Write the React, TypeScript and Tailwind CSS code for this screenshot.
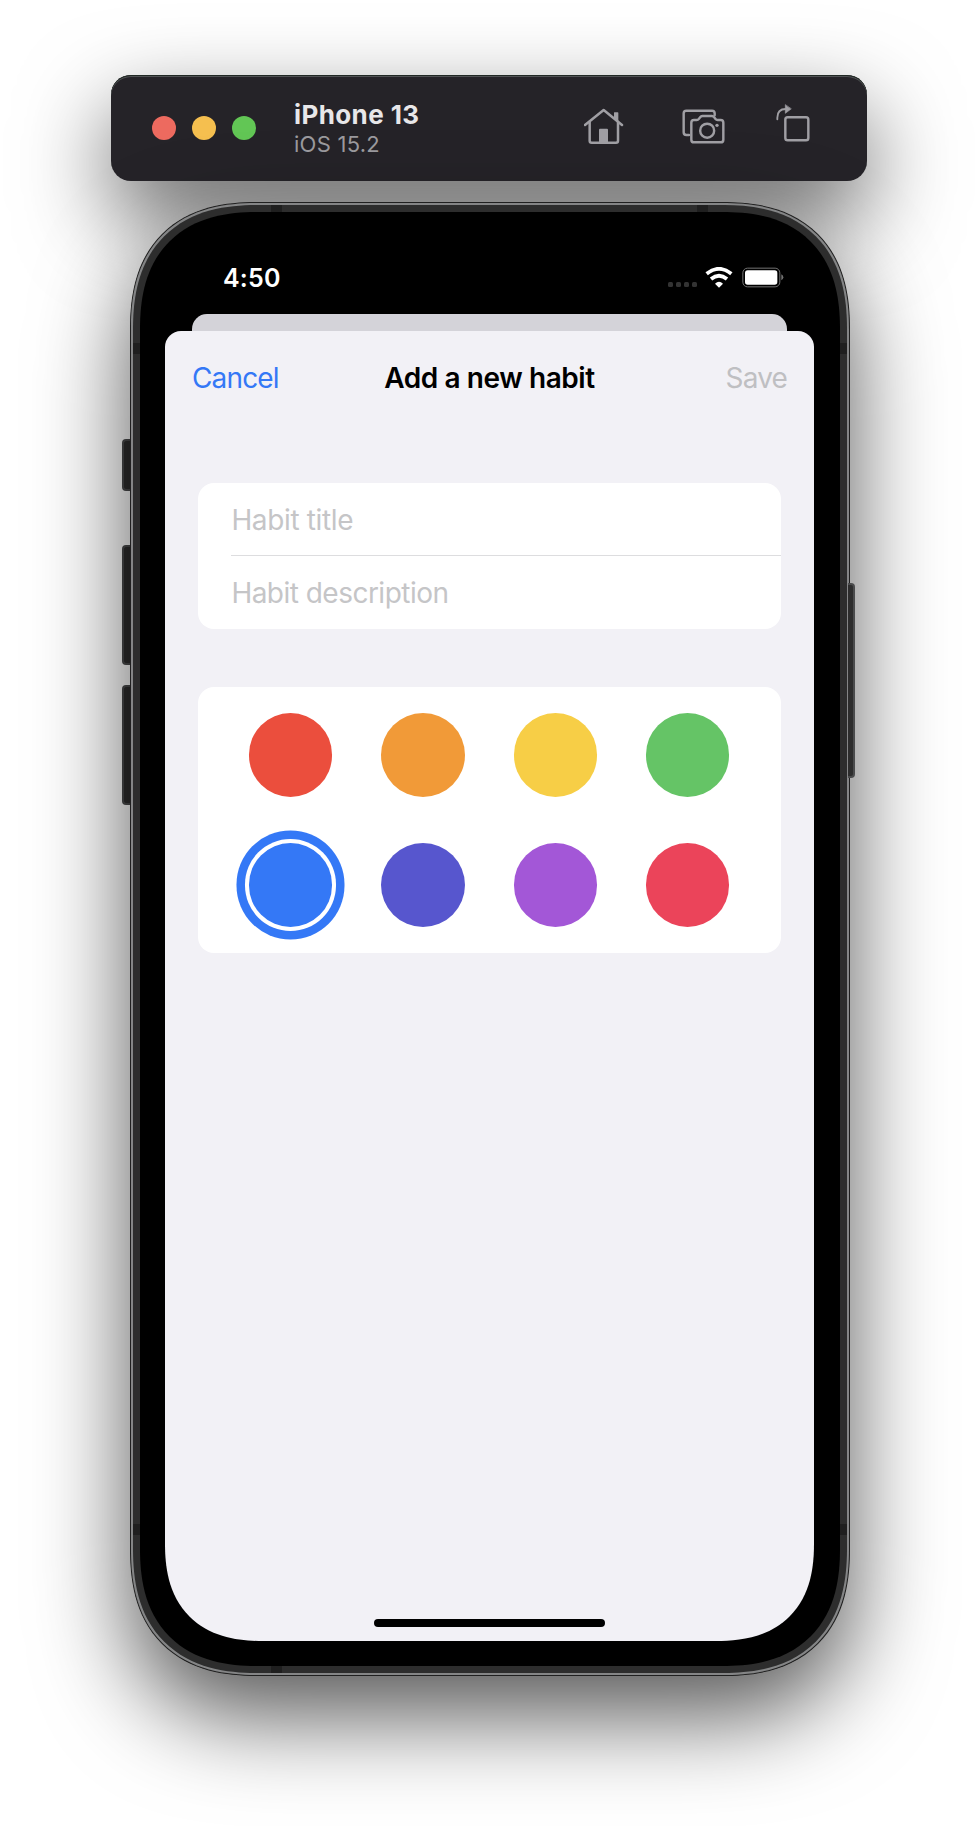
import React from "react";

const COLORS = [
  { name: "red", className: "bg-[#eb4e3d]" },
  { name: "orange", className: "bg-[#f19a38]" },
  { name: "yellow", className: "bg-[#f7ce46]" },
  { name: "green", className: "bg-[#65c466]" },
  { name: "blue", className: "bg-[#3478f6]", selected: true },
  { name: "indigo", className: "bg-[#5756ce]" },
  { name: "purple", className: "bg-[#a357d7]" },
  { name: "pink", className: "bg-[#eb445a]" },
];

function HomeIcon() {
  return (
    <svg width="40" height="36" viewBox="102 142 120 108" fill="none" stroke="#a09fa4" strokeWidth="7.500" strokeLinecap="round" strokeLinejoin="round">
      <path d="M105 193 161 148 216 193" />
      <path d="M119 184v56q0 6 6 6h73q6 0 6-6v-56" />
      <path d="M193 155h10q2 0 2 2v25l-13-9v-16q0-2 1-2z" fill="#a09fa4" stroke="none" />
      <path d="M147 246v-39q0-3 3-3h21q3 0 3 3v39z" fill="#a09fa4" stroke="none" />
    </svg>
  );
}

function CameraIcon() {
  return (
    <svg width="44" height="36" viewBox="397 145 132 108" fill="none" stroke="#a09fa4" strokeWidth="7.300" strokeLinecap="round" strokeLinejoin="round">
      <path d="M418 226h-8q-8 0-8-8v-57q0-8 8-8h77q8 0 8 8v6" />
      <path d="M433 181h8q4 0 7-4l4-5q2-3 6-3h29q4 0 6 3l4 5q3 4 7 4h9q8 0 8 8v51q0 8-8 8h-80q-8 0-8-8v-51q0-8 8-8z" />
      <circle cx="472.500" cy="213" r="21" />
      <circle cx="502" cy="197" r="5" fill="#a09fa4" stroke="none" />
    </svg>
  );
}

function RotateIcon() {
  return (
    <svg width="34" height="38" viewBox="678 134 102 114" fill="none" stroke="#a09fa4" strokeWidth="7.300" strokeLinecap="round" strokeLinejoin="round">
      <rect x="706" y="174" width="69" height="69" rx="7" />
      <path d="M682 180v-5q0-26 25-26" strokeWidth="5.500" />
      <path d="M706 137v25l17-13z" fill="#a09fa4" strokeWidth="2" />
    </svg>
  );
}

function StatusIcons() {
  return (
    <div className="flex items-end">
      <div className="flex gap-[3px] pb-[1px]">
        <i className="size-[5px] rounded-[1.500px] bg-[#333333]" />
        <i className="size-[5px] rounded-[1.500px] bg-[#333333]" />
        <i className="size-[5px] rounded-[1.500px] bg-[#333333]" />
        <i className="size-[5px] rounded-[1.500px] bg-[#333333]" />
      </div>
      <svg className="ml-[8px]" width="28" height="21" viewBox="255 229 84 63" fill="none" stroke="#fff" strokeWidth="11.500">
        <path d="M260 249Q297 220 334 249" />
        <path d="M273 265Q297 246 321 265" />
        <path d="M285 279Q297 268 309 279L297 291z" fill="#fff" stroke="none" />
      </svg>
      <svg className="ml-[9px]" width="42" height="21" viewBox="365 230 126 63">
        <rect x="367.500" y="233.500" width="111" height="56" rx="14" fill="none" stroke="#737373" strokeWidth="3" />
        <rect x="374" y="240" width="97" height="43" rx="8" fill="#fff" />
        <path d="M483 252q6 3 6 9t-6 9z" fill="#737373" />
      </svg>
    </div>
  );
}

function Toolbar() {
  return (
    <header className="mx-auto flex h-[106px] w-[756px] items-center rounded-[20px] bg-[#252328] pl-[41px] shadow-[0_36px_90px_rgba(0,0,0,0.6),inset_0_1px_0_#202824,inset_0_2px_0_#505254]">
      <div className="flex gap-4">
        <span className="size-6 rounded-full bg-[#ed6a5f]" />
        <span className="size-6 rounded-full bg-[#f5bf4f]" />
        <span className="size-6 rounded-full bg-[#62c655]" />
      </div>
      <div className="ml-[38px] w-[200px] pt-px">
        <div className="text-[26px] font-bold leading-[30px] tracking-[0.400px] text-[#e8e7e9]">iPhone 13</div>
        <div className="text-[22px] leading-[28px] tracking-[0.250px] text-[#9b9a9e]">iOS 15.2</div>
      </div>
      <div className="ml-[90px] flex pb-[4px]">
        <HomeIcon />
        <span className="ml-[58px] flex"><CameraIcon /></span>
        <span className="-mt-[4px] ml-[50px] flex"><RotateIcon /></span>
      </div>
    </header>
  );
}

function HardwareButtons() {
  return (
    <>
      <span className="absolute -left-[8px] top-[237px] h-[52px] w-[9px] rounded-l-[4px] border-2 border-r-0 border-[#4a4b4c] bg-[#2d2d2d]" />
      <span className="absolute -left-[8px] top-[343px] h-[120px] w-[9px] rounded-l-[4px] border-2 border-r-0 border-[#4a4b4c] bg-[#2d2d2d]" />
      <span className="absolute -left-[8px] top-[483px] h-[120px] w-[9px] rounded-l-[4px] border-2 border-r-0 border-[#4a4b4c] bg-[#2d2d2d]" />
      <span className="absolute -right-[5px] top-[381px] z-10 h-[195px] w-[7px] rounded-r-[4px] border-y-2 border-r-2 border-[#4a4b4c] bg-[#2d2d2d]" />
    </>
  );
}

function AntennaBands() {
  return (
    <>
      <i className="absolute left-[140px] top-[2px] h-[7px] w-[11px] bg-[#1f1f1f]" />
      <i className="absolute right-[141px] top-[2px] h-[7px] w-[11px] bg-[#1f1f1f]" />
      <i className="absolute bottom-[2px] left-[140px] h-[7px] w-[11px] bg-[#1f1f1f]" />
      <i className="absolute left-[2px] top-[140px] h-[11px] w-[7px] bg-[#1f1f1f]" />
      <i className="absolute right-[2px] top-[140px] h-[11px] w-[7px] bg-[#1f1f1f]" />
      <i className="absolute bottom-[140px] left-[2px] h-[11px] w-[7px] bg-[#1f1f1f]" />
      <i className="absolute bottom-[140px] right-[2px] h-[11px] w-[7px] bg-[#1f1f1f]" />
    </>
  );
}

function ColorPicker() {
  return (
    <div className="mx-[33.200px] mt-[58px] grid h-[266px] grid-cols-[repeat(4,83.400px)] content-start gap-x-[48.900px] gap-y-[46.600px] rounded-[16px] bg-white pl-[50.900px] pt-[26.400px]">
      {COLORS.map((c) =>
        c.selected ? (
          <span key={c.name} className="size-[83.400px] rounded-full bg-[#3478f6] shadow-[0_0_0_4px_#fff,0_0_0_12.500px_#3478f6]" />
        ) : (
          <span key={c.name} className={"size-[83.400px] rounded-full " + c.className} />
        )
      )}
    </div>
  );
}

function Sheet() {
  return (
    <main className="flex h-[1310px] flex-col overflow-hidden rounded-t-[16px] bg-[#f2f1f6]">
      <nav className="grid h-[94px] grid-cols-[1fr_auto_1fr] items-center px-[27px] text-[28px] leading-[34px]">
        <span className="tracking-[-0.850px] text-[#3478f6]">Cancel</span>
        <span className="font-semibold tracking-[-0.430px] text-black">Add a new habit</span>
        <span className="text-right tracking-[-0.850px] text-[#bfbfc2]">Save</span>
      </nav>
      <div className="mx-[33.200px] mt-[58px] h-[146px] rounded-[16px] bg-white pl-[33.200px] text-[28px] leading-[34px] text-[#c5c5c7]">
        <div className="flex h-[73px] items-center border-b border-[#dddddf] pt-[2px] tracking-[-0.350px]">Habit title</div>
        <div className="flex h-[73px] items-center tracking-[-0.520px]">Habit description</div>
      </div>
      <ColorPicker />
      <div className="mx-auto mb-[14px] mt-auto h-[8px] w-[231px] rounded-full bg-black" />
    </main>
  );
}

export default function App() {
  return (
    <div className="h-[1826px] w-[978px] overflow-hidden bg-white pt-[75px] font-['Inter','Liberation_Sans',sans-serif]">
      <Toolbar />
      <div className="relative ml-[130px] mt-[21px] h-[1474px] w-[720px]">
        <HardwareButtons />
        <div className="relative h-full rounded-[108px] border border-[#202020] bg-[#2d2d2d] shadow-[0_40px_94px_rgba(0,0,0,0.66)] supports-[corner-shape:squircle]:rounded-[128px] supports-[corner-shape:squircle]:[corner-shape:superellipse(1.27)]">
          <div className="h-full rounded-[107px] border-2 border-[#848586] p-[7px] supports-[corner-shape:squircle]:rounded-[127px] supports-[corner-shape:squircle]:[corner-shape:superellipse(1.27)]">
            <div className="h-full rounded-[98px] bg-black pl-[25px] pr-[26px] supports-[corner-shape:squircle]:rounded-[118px] supports-[corner-shape:squircle]:[corner-shape:superellipse(1.27)]">
              <div className="overflow-hidden rounded-b-[82px] supports-[corner-shape:squircle]:rounded-b-[98px] supports-[corner-shape:squircle]:[corner-shape:superellipse(1.27)]">
                <div className="flex h-[102px] items-start justify-between pl-[58px] pr-[30px] pt-[51px]">
                  <span className="text-[25px] font-semibold leading-[30px] tracking-[0.200px] text-white">4:50</span>
                  <span className="pt-[4px]"><StatusIcons /></span>
                </div>
                <div className="mx-[27px] h-[17px] rounded-t-[15px] bg-[#d4d3d9]" />
                <Sheet />
              </div>
            </div>
          </div>
          <AntennaBands />
        </div>
      </div>
    </div>
  );
}
